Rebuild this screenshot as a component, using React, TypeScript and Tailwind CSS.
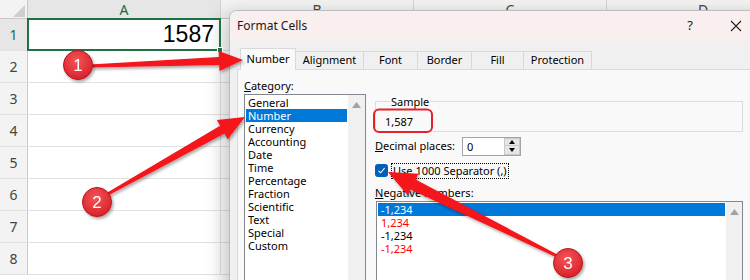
import React from "react";

const ui = { fontFamily: '"Noto Sans", "Open Sans", sans-serif' };

const categories = [
  "General",
  "Number",
  "Currency",
  "Accounting",
  "Date",
  "Time",
  "Percentage",
  "Fraction",
  "Scientific",
  "Text",
  "Special",
  "Custom",
];

const negatives = [
  { text: "-1,234", color: "text-white", selected: true },
  { text: "1,234", color: "text-[#ff0000]" },
  { text: "-1,234", color: "text-black" },
  { text: "-1,234", color: "text-[#ff0000]" },
];

const tabs = [
  { label: "Number", w: "w-[56px]" },
  { label: "Alignment", w: "w-[69px]" },
  { label: "Font", w: "w-[55px]" },
  { label: "Border", w: "w-[55px]" },
  { label: "Fill", w: "w-[53px]" },
  { label: "Protection", w: "w-[69px]" },
];

// tapered arrow polygon, tail -> tip
const arrow = (
  x1: number,
  y1: number,
  x2: number,
  y2: number,
  tw: number,
  sw: number,
  hl: number,
  hw: number
) => {
  const dx = x2 - x1;
  const dy = y2 - y1;
  const len = Math.hypot(dx, dy);
  const ux = dx / len;
  const uy = dy / len;
  const nx = -uy;
  const ny = ux;
  const bx = x2 - ux * hl;
  const by = y2 - uy * hl;
  const pts = [
    [x1 + (nx * tw) / 2, y1 + (ny * tw) / 2],
    [bx + (nx * sw) / 2, by + (ny * sw) / 2],
    [bx + nx * hw, by + ny * hw],
    [x2, y2],
    [bx - nx * hw, by - ny * hw],
    [bx - (nx * sw) / 2, by - (ny * sw) / 2],
    [x1 - (nx * tw) / 2, y1 - (ny * tw) / 2],
  ];
  return pts.map((p) => p.map((v) => v.toFixed(1)).join(",")).join(" ");
};

const Badge = ({ cx, cy, n }: { cx: number; cy: number; n: string }) => (
  <g filter="url(#sh)">
    <circle cx={cx} cy={cy} r={14.5} fill="url(#cg)" stroke="#b8161c" strokeWidth={1} />
    <text
      x={cx}
      y={cy + 6}
      textAnchor="middle"
      fill="#fff"
      fontSize="17"
      fontFamily='"Liberation Sans", sans-serif'
    >
      {n}
    </text>
  </g>
);

const Sheet = () => {
  const cols = ["A", "B", "C", "D"];
  const rows = [1, 2, 3, 4, 5, 6, 7, 8];
  return (
    <div className="flex flex-col" style={{ fontFamily: '"Noto Sans", sans-serif' }}>
      <div className="flex h-[19px] border-b border-[#c8c8c8] bg-[#f3f3f3]">
        <div className="relative w-[28px] shrink-0 border-r border-[#c8c8c8]">
          <svg className="absolute left-[13px] top-[5px]" width="12" height="12" viewBox="0 0 12 12">
            <polygon points="12,0 12,12 0,12" fill="#cfcfcf" />
          </svg>
        </div>
        {cols.map((c) => (
          <div
            key={c}
            className={`w-[193px] shrink-0 border-r border-[#d4d4d4] text-center text-[14px] leading-[19px] ${
              c === "A" ? "bg-[#e6e6e6] text-[#1d6b43]" : "text-[#444]"
            }`}
          >
            {c}
          </div>
        ))}
      </div>
      {rows.map((r) => (
        <div key={r} className="flex h-[32px] border-b border-[#e1e1e1]">
          <div
            className={`w-[28px] shrink-0 border-r border-[#c8c8c8] text-center text-[14px] leading-[31px] ${
              r === 1 ? "bg-[#e6e6e6] text-[#1d6b43]" : "bg-[#f3f3f3] text-[#444]"
            }`}
          >
            {r}
          </div>
          {cols.map((c) => (
            <div key={c} className="relative w-[193px] shrink-0 border-r border-[#e1e1e1] bg-white">
              {r === 1 && c === "A" && (
                <>
                  <div className="absolute -inset-[1px] z-10 border-2 border-[#1e7145]" />
                  <div className="absolute -bottom-[3px] -right-[3px] z-20 h-[6px] w-[6px] border border-white bg-[#1e7145]" />
                  <div
                    className="flex h-full items-center justify-end pr-[6px] text-[23px] text-black"
                    style={{ fontFamily: '"Liberation Sans", sans-serif' }}
                  >
                    1587
                  </div>
                </>
              )}
            </div>
          ))}
        </div>
      ))}
    </div>
  );
};

const UpTri = () => (
  <svg width="9" height="6" viewBox="0 0 9 6">
    <polygon points="4.5,0 9,6 0,6" fill="#a3a3a3" />
  </svg>
);

const Dialog = () => (
  <div
    className="absolute left-[229px] top-[10px] h-[290px] w-[540px] overflow-hidden rounded-tl-[8px] border border-[#bdbdbd] bg-[#f0f0f0] text-[11px] text-black shadow-[-6px_4px_18px_rgba(0,0,0,0.22)]"
    style={ui}
  >
    {/* title bar */}
    <div className="flex h-[30px] items-center bg-[#f9efee] pl-[7px]">
      <span className="text-[12px] text-[#1a1a1a]">Format Cells</span>
      <div className="ml-auto mr-[24px] flex items-center gap-[30px]">
        <span className="w-[16px] text-center text-[13px] text-[#222]">?</span>
        <svg width="16" height="16" viewBox="0 0 16 16">
          <path d="M3 3 L13 13 M13 3 L3 13" stroke="#222" strokeWidth="1.1" />
        </svg>
      </div>
    </div>

    {/* body */}
    <div className="pl-[7px] pt-[7px]">
      <div className="ml-[3px] flex h-[21px] items-end">
        {tabs.map((t, i) => (
          <div
            key={t.label}
            className={`${t.w} ${i > 0 ? "-ml-px" : ""} flex shrink-0 items-center justify-center border border-b-0 border-[#d9d9d9] ${
              i === 0 ? "relative z-10 -mb-px h-[22px] bg-[#f9f9f9]" : "h-[18px] bg-[#f0f0f0]"
            }`}
          >
            {t.label}
          </div>
        ))}
      </div>

      <div className="flex h-[220px] border border-[#d9d9d9] bg-[#f9f9f9] pl-[6px] pt-[9px]">
        {/* left column */}
        <div className="flex w-[122px] shrink-0 flex-col">
          <div className="h-[13px] leading-[13px]">
            <span className="underline">C</span>ategory:
          </div>
          <div className="mt-[2px] flex h-[200px] border border-[#828790] bg-white">
            <div className="flex w-[103px] flex-col px-[1px] pt-[1px]">
              {categories.map((c) => (
                <div
                  key={c}
                  className={`h-[13px] pl-[2px] leading-[13px] ${
                    c === "Number" ? "bg-[#0078d7] text-white" : "text-black"
                  }`}
                >
                  {c}
                </div>
              ))}
            </div>
            <div className="ml-auto flex w-[17px] justify-center bg-[#f0f0f0] pt-[7px]">
              <UpTri />
            </div>
          </div>
        </div>

        {/* right column */}
        <div className="ml-[9px] flex w-[368px] shrink-0 flex-col">
          <fieldset className="mt-[16px] h-[38px] border border-[#dcdcdc] pl-[9px]">
            <legend className="ml-[5px] px-[1px] leading-[13px]">Sample</legend>
            <div className="pt-[7px] leading-[13px]">1,587</div>
          </fieldset>

          <div className="mt-[5px] flex h-[19px] items-center">
            <div className="w-[87px] shrink-0">
              <span className="underline">D</span>ecimal places:
            </div>
            <div className="flex h-[19px] w-[59px] border border-[#a5a5a5] bg-white">
              <span className="pl-[4px] leading-[17px]">0</span>
              <div className="ml-auto flex w-[16px] flex-col">
                <div className="flex h-[8.5px] items-center justify-center border border-[#c8c8c8] bg-[#e6e6e6]">
                  <svg width="6" height="4" viewBox="0 0 6 4">
                    <polygon points="3,0 6,4 0,4" fill="#000" />
                  </svg>
                </div>
                <div className="flex h-[8.5px] items-center justify-center border border-t-0 border-[#c8c8c8] bg-[#e6e6e6]">
                  <svg width="6" height="4" viewBox="0 0 6 4">
                    <polygon points="0,0 6,0 3,4" fill="#000" />
                  </svg>
                </div>
              </div>
            </div>
          </div>

          <div className="mt-[7px] flex h-[16px] items-center">
            <div className="flex h-[13px] w-[13px] items-center justify-center rounded-[3px] bg-[#005fb8]">
              <svg width="9" height="9" viewBox="0 0 9 9">
                <path d="M1.5 4.8 L3.6 6.8 L7.6 2.2" fill="none" stroke="#fff" strokeWidth="1.1" />
              </svg>
            </div>
            <div className="ml-[3px] h-[16px] border border-dotted border-black px-[1px] leading-[14px]">
              <span className="underline">U</span>se 1000 Separator (,)
            </div>
          </div>

          <div className="mt-[7px] h-[13px] leading-[13px]">
            <span className="underline">N</span>egative numbers:
          </div>

          <div className="ml-[1px] mt-[2px] flex h-[90px] w-[367px] border border-[#828790] bg-white">
            <div className="flex w-[349px] flex-col px-[1px] pt-[1px]">
              {negatives.map((n, i) => (
                <div
                  key={i}
                  className={`h-[13px] pl-[3px] leading-[13px] ${n.color} ${n.selected ? "bg-[#0078d7]" : ""}`}
                >
                  {n.text}
                </div>
              ))}
            </div>
            <div className="ml-auto flex w-[16px] justify-center bg-[#f0f0f0] pt-[7px]">
              <UpTri />
            </div>
          </div>
        </div>
      </div>
    </div>
  </div>
);

const Annotations = () => (
  <svg className="pointer-events-none absolute left-0 top-0 z-30" width="750" height="280" viewBox="0 0 750 280">
    <defs>
      <filter id="sh" x="-30%" y="-30%" width="160%" height="160%">
        <feDropShadow dx="1.5" dy="2" stdDeviation="1.6" floodColor="#000" floodOpacity="0.35" />
      </filter>
      <radialGradient id="cg" cx="45%" cy="35%" r="70%">
        <stop offset="0%" stopColor="#f4555a" />
        <stop offset="100%" stopColor="#d71e25" />
      </radialGradient>
    </defs>
    <rect x="374" y="109.5" width="58" height="22.5" rx="5" fill="none" stroke="#e3222a" strokeWidth="2" />
    <g filter="url(#sh)" fill="#f5121a">
      <polygon points={arrow(90, 66, 243, 60, 3, 8, 24, 10)} />
      <polygon points={arrow(106, 195, 245, 117, 3, 9, 26, 11)} />
      <polygon points={arrow(557, 256, 388, 172, 3, 11, 28, 12)} />
    </g>
    <Badge cx={78} cy={65} n="1" />
    <Badge cx={97} cy={202} n="2" />
    <Badge cx={568} cy={263} n="3" />
  </svg>
);

export default function App() {
  return (
    <div className="relative h-[280px] w-[750px] overflow-hidden bg-white">
      <Sheet />
      <Dialog />
      <Annotations />
    </div>
  );
}
